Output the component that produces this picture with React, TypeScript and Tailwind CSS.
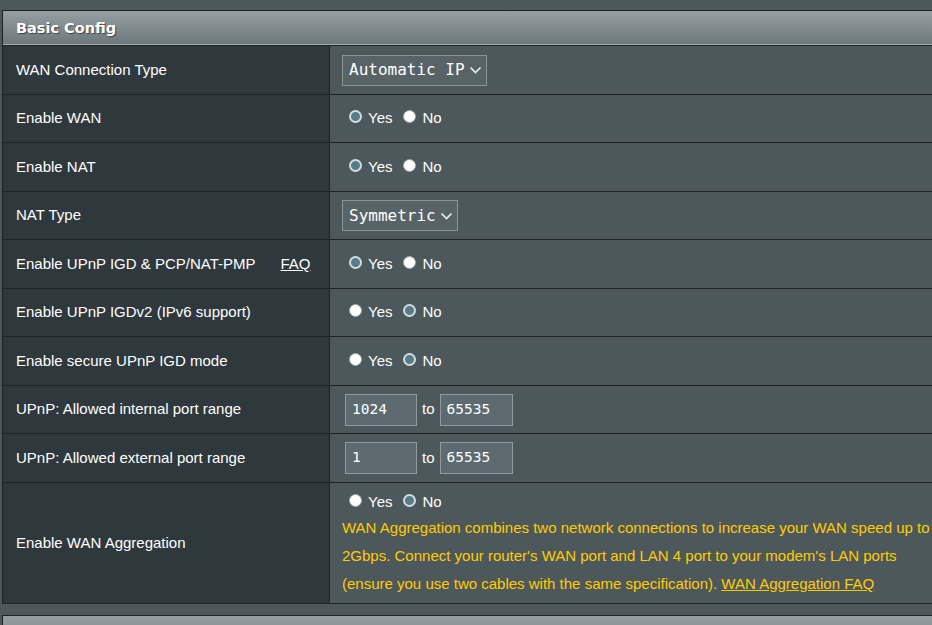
import React from "react";

type Row = {
  label: string;
  faq?: boolean;
  h: string;
  kind: "select" | "radio" | "range";
  value?: string;
  selW?: string;
  yes?: boolean;
  from?: string;
  to?: string;
};

const rows: Row[] = [
  { label: "WAN Connection Type", h: "h-[49px]", kind: "select", value: "Automatic IP", selW: "w-[145px]" },
  { label: "Enable WAN", h: "h-[48px]", kind: "radio", yes: true },
  { label: "Enable NAT", h: "h-[49px]", kind: "radio", yes: true },
  { label: "NAT Type", h: "h-[48px]", kind: "select", value: "Symmetric", selW: "w-[116px]" },
  { label: "Enable UPnP IGD & PCP/NAT-PMP", faq: true, h: "h-[49px]", kind: "radio", yes: true },
  { label: "Enable UPnP IGDv2 (IPv6 support)", h: "h-[48px]", kind: "radio", yes: false },
  { label: "Enable secure UPnP IGD mode", h: "h-[49px]", kind: "radio", yes: false },
  { label: "UPnP: Allowed internal port range", h: "h-[48px]", kind: "range", from: "1024", to: "65535" },
  { label: "UPnP: Allowed external port range", h: "h-[49px]", kind: "range", from: "1", to: "65535" },
];

function Radio({ on }: { on: boolean }) {
  return on ? (
    <span className="relative -top-[2px] inline-block w-[13px] h-[13px] rounded-full border-2 border-[#d3dcdf] bg-[#587b89]" />
  ) : (
    <span className="relative -top-[2px] inline-block w-[13px] h-[13px] rounded-full border border-[#9aa] bg-white" />
  );
}

function YesNo({ yes }: { yes: boolean }) {
  return (
    <div className="flex items-center pl-[19px] text-[15px] text-white">
      <Radio on={yes} />
      <span className="ml-[6px]">Yes</span>
      <span className="ml-[11px]" />
      <Radio on={!yes} />
      <span className="ml-[6px]">No</span>
    </div>
  );
}

function Chevron() {
  return (
    <svg className="w-[13px] h-[10px]" viewBox="0 0 13 10" fill="none" stroke="#e8eef0" strokeWidth={1.7}>
      <path d="M1.5 2.5l5 5 5-5" />
    </svg>
  );
}

export default function App() {
  return (
    <div
      className="min-h-screen overflow-hidden bg-[#4d585c] pt-[10px] pl-[2px]"
      style={{ fontFamily: '"Liberation Sans", Arial, sans-serif' }}
    >
      <div className="border-t border-l border-b border-[#1e2426]">
        {/* header */}
        <div className="h-[35px] flex items-center pl-[13px] bg-gradient-to-b from-[#959fa4] to-[#6c777b] border-b border-[#1e2426] shadow-[inset_0_-1px_0_#a4adb1]">
          <span
            className="text-[14.5px] font-bold text-white pt-[1px] [text-shadow:1px_1px_1px_#3a4346]"
            style={{ fontFamily: '"DejaVu Sans", Verdana, sans-serif' }}
          >
            Basic Config
          </span>
        </div>

        {rows.map((r, i) => (
          <div key={i} className={`flex ${r.h} border-b border-[#1e2426]`}>
            <div className="w-[327px] shrink-0 flex items-center pl-[13px] bg-[#2f383c] border-r border-[#1e2426] text-[15px] text-white">
              <span>{r.label}</span>
              {r.faq && <span className="ml-[25px] underline">FAQ</span>}
            </div>
            <div className="flex-1 flex items-center bg-[#4d585c]">
              {r.kind === "select" && (
                <div
                  className={`ml-[12px] ${r.selW} h-[31px] flex items-center justify-between pl-[6px] pr-[4px] bg-[#586368] border border-[#8a9599] text-[16px] text-white`}
                  style={{ fontFamily: '"DejaVu Sans Mono", monospace' }}
                >
                  <span>{r.value}</span>
                  <Chevron />
                </div>
              )}
              {r.kind === "radio" && <YesNo yes={!!r.yes} />}
              {r.kind === "range" && (
                <div className="flex items-center ml-[15px] text-[15px] text-white">
                  <div
                    className="w-[72px] h-[32px] flex items-center pl-[6px] bg-[#5d6a70] border border-[#8f9a9e] text-[14.5px]"
                    style={{ fontFamily: '"DejaVu Sans Mono", monospace' }}
                  >
                    {r.from}
                  </div>
                  <span className="ml-[5px] mr-[5px]">to</span>
                  <div
                    className="w-[73px] h-[32px] flex items-center pl-[6px] bg-[#5d6a70] border border-[#8f9a9e] text-[14.5px]"
                    style={{ fontFamily: '"DejaVu Sans Mono", monospace' }}
                  >
                    {r.to}
                  </div>
                </div>
              )}
            </div>
          </div>
        ))}

        {/* WAN aggregation */}
        <div className="flex h-[120px]">
          <div className="w-[327px] shrink-0 flex items-center pl-[13px] bg-[#2f383c] border-r border-[#1e2426] text-[15px] text-white">
            Enable WAN Aggregation
          </div>
          <div className="flex-1 bg-[#4d585c] pt-[7px]">
            <div className="h-[24px] flex items-center">
              <YesNo yes={false} />
            </div>
            <p className="pl-[12px] text-[15px] leading-[28px] text-[#ffcc00] whitespace-nowrap">
              WAN Aggregation combines two network connections to increase your WAN speed up to
              <br />
              2Gbps. Connect your router's WAN port and LAN 4 port to your modem's LAN ports
              <br />
              (ensure you use two cables with the same specification).{" "}
              <span className="underline">WAN Aggregation FAQ</span>
            </p>
          </div>
        </div>
      </div>

      {/* next panel */}
      <div className="mt-[11px] h-[40px] border-t border-l border-[#1e2426] bg-gradient-to-b from-[#959fa4] to-[#6c777b]" />
    </div>
  );
}
